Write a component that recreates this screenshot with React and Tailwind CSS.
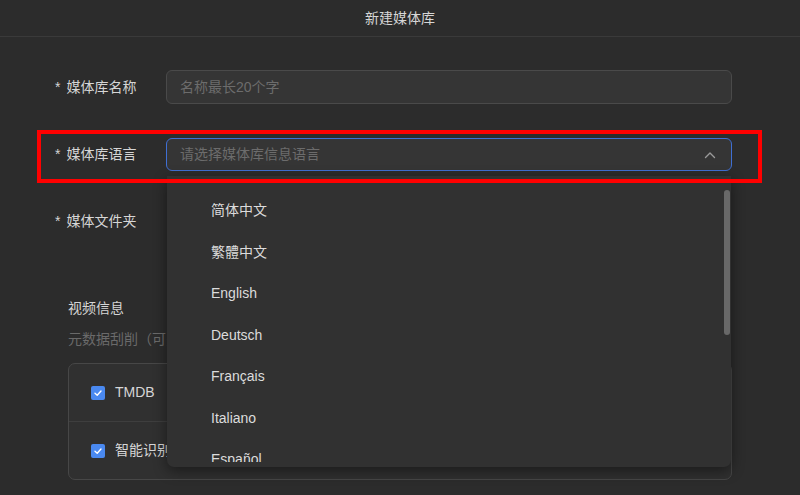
import React from 'react';

const font = { fontFamily: '"Liberation Sans", "Noto Sans CJK SC", sans-serif' };

const languages = ['简体中文', '繁體中文', 'English', 'Deutsch', 'Français', 'Italiano', 'Español'];

const Check = () => (
  <span className="w-[14px] h-[14px] rounded-[2px] bg-[#4a89f0] flex items-center justify-center">
    <svg width="10" height="10" viewBox="0 0 10 10" fill="none">
      <path d="M2 5.2 L4.2 7.2 L8 3" stroke="white" strokeWidth="1.4" strokeLinecap="round" strokeLinejoin="round" />
    </svg>
  </span>
);

const Label = ({ children }) => (
  <div className="w-[111px] shrink-0 text-[14px] text-[#d6d6d6] whitespace-nowrap">
    <span className="mr-[6px]">*</span>
    {children}
  </div>
);

const App = () => {
  return (
    <main
      style={font}
      className="w-[800px] h-[495px] bg-[#2c2c2c] overflow-hidden relative"
    >
      <header className="h-[37px] border-b border-[#3a3a3a] flex items-center justify-center text-[14px] text-[#d6d6d6]">
        新建媒体库
      </header>

      <section className="pl-[55px] pr-[68px] pt-[33px]">
        <div className="flex items-center h-[34px]">
          <Label>媒体库名称</Label>
          <div className="flex-1 h-full rounded-[6px] border border-[#4a4a4a] bg-[#353535] flex items-center px-[13px] text-[14px] text-[#6c6c6c]">
            名称最长20个字
          </div>
        </div>

        <div className="flex items-center h-[33px] mt-[34px] relative">
          <Label>媒体库语言</Label>
          <div className="flex-1 h-full rounded-[6px] border border-[#3f6fd4] bg-[#353535] flex items-center justify-between px-[13px] text-[14px] text-[#6c6c6c]">
            请选择媒体库信息语言
            <svg width="12" height="8" viewBox="0 0 12 8" fill="none" className="mr-[2px]">
              <path d="M1.5 6.5 L6 2 L10.5 6.5" stroke="#9a9a9a" strokeWidth="1.4" strokeLinecap="round" strokeLinejoin="round" />
            </svg>
          </div>

          <div className="absolute left-[112px] top-[38px] w-[564px] pb-[5px] bg-[#313131] rounded-b-[7px] shadow-[0_4px_14px_rgba(0,0,0,0.45)] z-10">
            <div className="h-[286px] overflow-hidden relative">
              <ul className="pt-[14px]">
                {languages.map((lang) => (
                  <li
                    key={lang}
                    className="h-[41.5px] flex items-center pl-[44px] text-[14px] text-[#dcdcdc]"
                  >
                    {lang}
                  </li>
                ))}
              </ul>
              <div className="absolute right-[1px] top-[14px] w-[6px] h-[145px] rounded-full bg-[#686868]"></div>
            </div>
          </div>

          <div className="absolute left-[-18px] top-[-8px] right-[-30px] bottom-[-12px] border-4 border-[#ff0000] z-20 pointer-events-none"></div>
        </div>

        <div className="flex items-center h-[34px] mt-[33px]">
          <Label>媒体文件夹</Label>
        </div>

        <div className="pl-[13px]">
          <p className="mt-[60px] h-[20px] leading-[20px] text-[14px] text-[#d6d6d6]">视频信息</p>
          <p className="mt-[11px] h-[20px] leading-[20px] text-[14px] text-[#6a6a6a]">
            元数据刮削（可多选，按顺序优先匹配）
          </p>
          <div className="mt-[14px] h-[117px] rounded-[7px] border border-[#474747] bg-[#303030] flex flex-col">
            <div className="h-[58px] flex items-center gap-[10px] pl-[22px] border-b border-[#3e3e3e] text-[14px] text-[#d6d6d6]">
              <Check />
              TMDB
            </div>
            <div className="flex-1 flex items-center gap-[10px] pl-[22px] text-[14px] text-[#d6d6d6]">
              <Check />
              智能识别（推荐）
            </div>
          </div>
        </div>
      </section>
    </main>
  );
};

export default App;
